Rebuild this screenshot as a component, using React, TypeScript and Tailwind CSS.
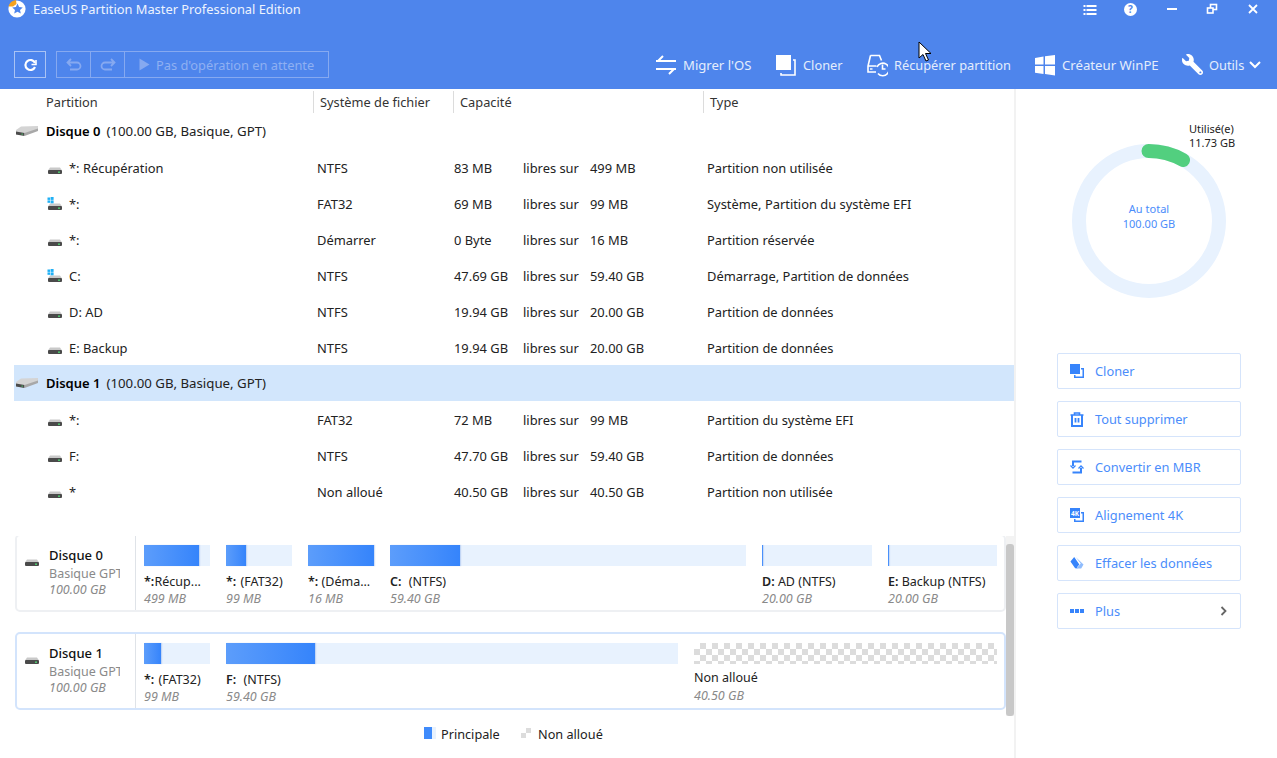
import React from "react";
import { FaWrench } from "react-icons/fa";

const font = "font-['Noto_Sans','Open_Sans',sans-serif]";

type Part = { name: string; fs: string; free: string; total: string; type: string; win?: boolean };

const disk0: Part[] = [
  { name: "*: Récupération", fs: "NTFS", free: "83 MB", total: "499 MB", type: "Partition non utilisée" },
  { name: "*:", fs: "FAT32", free: "69 MB", total: "99 MB", type: "Système, Partition du système EFI", win: true },
  { name: "*:", fs: "Démarrer", free: "0 Byte", total: "16 MB", type: "Partition réservée" },
  { name: "C:", fs: "NTFS", free: "47.69 GB", total: "59.40 GB", type: "Démarrage, Partition de données", win: true },
  { name: "D: AD", fs: "NTFS", free: "19.94 GB", total: "20.00 GB", type: "Partition de données" },
  { name: "E: Backup", fs: "NTFS", free: "19.94 GB", total: "20.00 GB", type: "Partition de données" },
];

const disk1: Part[] = [
  { name: "*:", fs: "FAT32", free: "72 MB", total: "99 MB", type: "Partition du système EFI" },
  { name: "F:", fs: "NTFS", free: "47.70 GB", total: "59.40 GB", type: "Partition de données" },
  { name: "*", fs: "Non alloué", free: "40.50 GB", total: "40.50 GB", type: "Partition non utilisée" },
];

type Bar = { w: number; fill: number; letter: string; label: string; size: string; nudge?: string; hatch?: boolean };

const bars0: Bar[] = [
  { w: 66, fill: 55, letter: "*:", label: "Récup...", size: "499 MB", nudge: "-ml-[3px]" },
  { w: 66, fill: 20, letter: "*:", label: "(FAT32)", size: "99 MB", nudge: "ml-px" },
  { w: 66, fill: 66, letter: "*:", label: "(Déma...", size: "16 MB" },
  { w: 356, fill: 70, letter: "C:", label: "(NTFS)", size: "59.40 GB", nudge: "ml-[4px]" },
  { w: 110, fill: 1, letter: "D:", label: "AD (NTFS)", size: "20.00 GB" },
  { w: 109, fill: 1, letter: "E:", label: "Backup (NTFS)", size: "20.00 GB" },
];

const bars1: Bar[] = [
  { w: 66, fill: 17, letter: "*:", label: "(FAT32)", size: "99 MB", nudge: "ml-px" },
  { w: 452, fill: 89, letter: "F:", label: "(NTFS)", size: "59.40 GB", nudge: "ml-[4px]" },
  { w: 303, fill: 0, letter: "", label: "Non alloué", size: "40.50 GB", hatch: true },
];

function DriveIcon({ win }: { win?: boolean }) {
  return (
    <svg width="16" height="14" viewBox="0 0 16 14" className="shrink-0">
      <path d="M3 6.5h10l2 3H1z" fill="#c9c9c9" />
      <rect x="1" y="9" width="14" height="4" rx="1" fill="#4a4a4a" />
      <rect x="11" y="10.5" width="2" height="1.4" fill="#4fd070" />
      {win && (
        <g fill="#1fb0f5">
          <rect x="0.5" y="0.5" width="2.6" height="2.4" />
          <rect x="3.6" y="0" width="3" height="2.9" />
          <rect x="0.5" y="3.4" width="2.6" height="2.4" />
          <rect x="3.6" y="3.4" width="3" height="2.9" />
        </g>
      )}
    </svg>
  );
}

function BigDriveIcon() {
  return (
    <svg width="24" height="12" viewBox="0 0 24 12" className="shrink-0">
      <path d="M6 1.5 23 1v3.5L10 10 1 9.5V5z" fill="#d4d4d4" />
      <path d="M1 6.5 9.5 8v3L1 9.5z" fill="#4b4b4b" />
      <path d="M9.5 8 23 3.5V6L9.5 11z" fill="#a8a8a8" />
      <rect x="6.5" y="8.6" width="1.4" height="1" fill="#4fd070" />
    </svg>
  );
}

function Logo() {
  return (
    <svg width="20" height="18" viewBox="0 0 20 18" className="shrink-0">
      <circle cx="10" cy="9" r="8.6" fill="#fff" />
      <path d="M1.4 6.5A9 9 0 0 1 9 0L9.5 4 6 6.5z" fill="#f4a21f" />
      <path d="m10.5 3.6 1.6 3.4 3.7.4-2.8 2.5.8 3.7-3.3-1.9-3.3 1.9.8-3.7-2.8-2.5 3.7-.4z" fill="#4e85ec" />
    </svg>
  );
}

function WindowButtons() {
  return (
    <div className="flex items-start pt-[2px] text-white">
      <svg width="14" height="14" viewBox="0 0 14 14" fill="#fff" className="mt-[1px] mr-[27px]">
        <rect x="0.5" y="2" width="2" height="2" />
        <rect x="3.5" y="2" width="10" height="2" />
        <rect x="0.5" y="6" width="2" height="2" />
        <rect x="3.5" y="6" width="10" height="2" />
        <rect x="0.5" y="10" width="2" height="2" />
        <rect x="3.5" y="10" width="10" height="2" />
      </svg>
      <div className="mr-[30px] w-[13px] h-[13px] mt-[1px] rounded-full bg-white text-[#4e85ec] text-[10px] font-bold leading-[13px] text-center">?</div>
      <div className="mt-[6px] mr-[29px] w-[10px] h-[2px] bg-white" />
      <svg width="12" height="12" viewBox="0 0 12 12" fill="none" stroke="#fff" strokeWidth="1.6" className="mt-[1px] mr-[29px]">
        <rect x="4.5" y="1.5" width="6" height="5" />
        <rect x="1.5" y="5" width="5.5" height="5" fill="#4e85ec" />
      </svg>
      <svg width="12" height="12" viewBox="0 0 12 12" stroke="#fff" strokeWidth="1.8" className="mt-[1px] mr-[18px]">
        <path d="m2 2 8 8M10 2l-8 8" />
      </svg>
    </div>
  );
}

function ToolIcon({ kind }: { kind: string }) {
  if (kind === "migrate")
    return (
      <svg width="22" height="22" viewBox="0 0 22 22" fill="none" stroke="#fff" strokeWidth="2">
        <path d="M1 7h20M8 2 3 7M1 15h20M14 20l5-5" />
      </svg>
    );
  if (kind === "clone")
    return (
      <svg width="21" height="22" viewBox="0 0 21 22" fill="none">
        <rect x="0" y="1" width="15" height="15" fill="#fff" />
        <path d="M17 6h2v15H5v-2" stroke="#fff" strokeWidth="1.6" />
      </svg>
    );
  if (kind === "recover")
    return (
      <svg width="22" height="24" viewBox="0 0 22 24" fill="none" stroke="#fff" strokeWidth="1.6">
        <path d="M4.500 2.500h9l2 5M4.500 2.500 2 13v6h8M2 13h8.500" />
        <rect x="4" y="15.300" width="2.500" height="1.400" fill="#fff" stroke="none" />
        <path d="M12 20.500A6.300 6.300 0 1 0 11 14" />
        <path d="M16.500 11.500v4.500h3" />
      </svg>
    );
  if (kind === "win")
    return (
      <svg width="22" height="22" viewBox="0 0 22 22" fill="#fff">
        <path d="M1 4l8.500-1.500v8H1zM11 2.200 21 1v9.500H11zM1 12h8.500v8L1 18.700zM11 12h10v9.500l-10-1.500z" />
      </svg>
    );
  return <FaWrench size={21} color="#fff" className="-scale-x-100" />;
}

function ToolItem({ kind, label, className }: { kind: string; label: string; className: string }) {
  return (
    <div className={`flex items-center gap-[6px] text-[#e4edfc] ${className}`}>
      <ToolIcon kind={kind} />
      <span className="pt-[2px]">{label}</span>
    </div>
  );
}

function Header() {
  return (
    <div className="h-[89px] shrink-0 bg-[#4e85ec] flex flex-col">
      <div className="h-[51px] flex justify-between">
        <div className="flex items-start gap-[6px] pl-[7px] text-[12.85px] leading-[18px]">
          <Logo />
          <span className="text-[#edf3fe]">EaseUS Partition Master Professional Edition</span>
        </div>
        <WindowButtons />
      </div>
      <div className="h-[27px] flex items-center pl-[14px]">
        <div className="w-[32px] h-[27px] border border-[#a9c3f4] flex items-center justify-center mr-[10px]">
          <svg width="14" height="14" viewBox="0 0 14 14" fill="none" stroke="#fff" strokeWidth="2.2">
            <path d="M12 5A5 5 0 1 0 12 9" />
            <path d="M13 2v4.500H8.500" strokeWidth="1.6" />
          </svg>
        </div>
        <div className="w-[273px] h-[27px] border border-[#86a9f0] flex text-[12.8px] text-[#8fb0f2]">
          <div className="w-[34px] border-r border-[#86a9f0] flex items-center justify-center">
            <svg width="16" height="13" viewBox="0 0 16 13" fill="none" stroke="#86a9f0" strokeWidth="1.8">
              <path d="M5 1 1.500 4.500 5 8M2 4.500h9a3.500 3.500 0 0 1 0 7H4" />
            </svg>
          </div>
          <div className="w-[34px] border-r border-[#86a9f0] flex items-center justify-center">
            <svg width="16" height="13" viewBox="0 0 16 13" fill="none" stroke="#86a9f0" strokeWidth="1.8">
              <path d="M11 1l3.500 3.500L11 8M14 4.500H5a3.500 3.500 0 0 0 0 7h7" />
            </svg>
          </div>
          <div className="flex items-center pl-[14px] gap-[6px]">
            <svg width="11" height="13" viewBox="0 0 11 13" fill="#86a9f0">
              <path d="M0.500 0.500 10.500 6.500 0.500 12.500z" />
            </svg>
            <span className="pt-[2px]">Pas d'opération en attente</span>
          </div>
        </div>
        <ToolItem kind="migrate" label="Migrer l'OS" className="ml-[326px] w-[121px] text-[13.1px]" />
        <ToolItem kind="clone" label="Cloner" className="w-[90px] text-[12.8px]" />
        <ToolItem kind="recover" label="Récupérer partition" className="w-[168px] text-[12.8px]" />
        <ToolItem kind="win" label="Créateur WinPE" className="w-[148px] text-[13.2px]" />
        <ToolItem kind="tools" label="Outils" className="text-[12.8px]" />
        <svg width="12" height="8" viewBox="0 0 12 8" fill="none" stroke="#fff" strokeWidth="2" className="ml-[5px]">
          <path d="m1 1 5 5 5-5" />
        </svg>
      </div>
    </div>
  );
}

function ColumnHeader({ label, className }: { label: string; className: string }) {
  return <div className={`h-[22px] pt-[2px] flex items-center text-[12.8px] text-[#333] ${className}`}>{label}</div>;
}

function PartRow({ p }: { p: Part }) {
  return (
    <div className="h-[36px] flex items-center text-[12.9px] text-[#222]">
      <div className="w-[303px] flex items-center pl-[33px] gap-[6px]">
        <DriveIcon win={p.win} />
        <span className="pt-[2px]">{p.name}</span>
      </div>
      <div className="w-[137px] pt-[2px]">{p.fs}</div>
      <div className="w-[69px] pt-[2px]">{p.free}</div>
      <div className="w-[67px] pt-[2px]">libres sur</div>
      <div className="w-[117px] pt-[2px]">{p.total}</div>
      <div className="pt-[2px]">{p.type}</div>
    </div>
  );
}

function DiskRow({ name, active }: { name: string; active?: boolean }) {
  return (
    <div className={`h-[36px] flex items-center text-[13.25px] text-[#222] pl-[1px] gap-[7px] ${active ? "bg-[#d2e6fc] -mt-px" : ""}`}>
      <BigDriveIcon />
      <span className="pt-[2px]">
        <span className="font-semibold text-black text-[13px]">{name}</span>
        <span className="ml-[6px]">(100.00 GB, Basique, GPT)</span>
      </span>
    </div>
  );
}

function BarCell({ b }: { b: Bar }) {
  return (
    <div className="shrink-0" style={{ width: b.w }}>
      {b.hatch ? (
        <div className="h-[21px] bg-[repeating-conic-gradient(#dcdcdc_0_25%,#ffffff_0_50%)] bg-[length:12px_12px]" />
      ) : (
        <div className="h-[21px] bg-[#e8f2fe]">
          <div
            className="h-full bg-gradient-to-r from-[#5c9dfb] to-[#3584fb] shadow-[1px_0_1px_rgba(80,130,220,0.25)]"
            style={{ width: b.fill }}
          />
        </div>
      )}
      <div className={`text-[12.5px] text-[#222] whitespace-pre leading-[18px] ${b.hatch ? "mt-[5px]" : "mt-[7px]"}`}>
        {b.letter && <span className="font-semibold">{b.letter} </span>}
        <span className={b.nudge}>{b.label}</span>
      </div>
      <div className={`text-[12.5px] italic text-[#8a8a8a] leading-[16px] ${b.hatch ? "mt-[1px]" : "mt-0"}`}>{b.size}</div>
    </div>
  );
}

function DiskCard({ name, bars, active, className }: { name: string; bars: Bar[]; active?: boolean; className: string }) {
  return (
    <div className={`h-[78px] w-[991px] rounded-[5px] border-2 flex ${active ? "border-[#d3e4fc]" : "border-[#eef0f3]"} ${className}`}>
      <div className="w-[119px] shrink-0 border-r border-[#dfe3e8] flex items-start">
        <div className="pl-[7px] pt-[17px]">
          <DriveIcon />
        </div>
        <div className="pl-[9px] pt-[10px] overflow-hidden">
          <div className="text-[13px] font-medium text-[#111] leading-[18px]">{name}</div>
          <div className="text-[12.5px] text-[#8a8a8a] leading-[18px] mt-[1px] w-[71px] overflow-hidden whitespace-nowrap">Basique GPT</div>
          <div className="text-[12.5px] italic text-[#8a8a8a] leading-[16px] -mt-px">100.00 GB</div>
        </div>
      </div>
      <div className="flex gap-[16px] pl-[8px] pt-[9px]">
        {bars.map((b, i) => (
          <BarCell key={i} b={b} />
        ))}
      </div>
    </div>
  );
}

function PartitionPane() {
  return (
    <div className="relative w-[1014px] shrink-0 flex flex-col">
      <div className="h-[24px] pt-[2px] flex">
        <ColumnHeader label="Partition" className="w-[314px] pl-[46px] border-r border-[#dcdcdc]" />
        <ColumnHeader label="Système de fichier" className="w-[140px] pl-[6px] border-r border-[#dcdcdc]" />
        <ColumnHeader label="Capacité" className="w-[250px] pl-[6px] border-r border-[#dcdcdc]" />
        <ColumnHeader label="Type" className="pl-[6px]" />
      </div>
      <div className="h-[423px] pl-[14px] overflow-hidden">
        <DiskRow name="Disque 0" />
        <div className="pt-px">
          {disk0.map((p, i) => (
            <PartRow key={i} p={p} />
          ))}
        </div>
        <DiskRow name="Disque 1" active />
        <div className="pt-px">
          {disk1.map((p, i) => (
            <PartRow key={i} p={p} />
          ))}
        </div>
      </div>
      <div className="flex-1 overflow-hidden pl-[15px] relative">
        <DiskCard name="Disque 0" bars={bars0} className="-mt-[2px]" />
        <DiskCard name="Disque 1" bars={bars1} active className="mt-[20px]" />
        <div className="mt-[12px] w-[991px] flex items-center text-[12.7px] text-[#222] pl-[409px]">
          <div className="w-[12px] h-[12px] bg-gradient-to-r from-[#3f8bfb] from-70% to-[#e8f2fe] to-70%" />
          <span className="ml-[5px] w-[80px] pt-[3px]">Principale</span>
          <div className="w-[10px] h-[10px] bg-[repeating-conic-gradient(#dcdcdc_0_25%,#ffffff_0_50%)] bg-[length:10px_10px]" />
          <span className="ml-[7px] pt-[3px]">Non alloué</span>
        </div>
        <div className="absolute right-0 top-0 h-[180px] w-[8px] bg-[#f3f3f3]">
          <div className="mt-[8px] h-[172px] bg-[#c8c8c8] rounded-[3px]" />
        </div>
      </div>
    </div>
  );
}

function ActionIcon({ kind }: { kind: string }) {
  if (kind === "clone")
    return (
      <svg width="14" height="14" viewBox="0 0 14 14" fill="#3784fb">
        <rect x="0" y="0" width="10" height="10" />
        <path d="M11 4h3v10H4v-3h1.500v1.500h7V5.500H11z" />
      </svg>
    );
  if (kind === "trash")
    return (
      <svg width="14" height="15" viewBox="0 0 14 15" fill="none" stroke="#3784fb">
        <path d="M0.500 3h13M4.500 3V1h5v2" strokeWidth="1.600" />
        <path d="M2 3v11h10V3" strokeWidth="2" />
        <path d="M5.500 6v4.500M8.500 6v4.500" strokeWidth="1.800" />
      </svg>
    );
  if (kind === "convert")
    return (
      <svg width="14" height="14" viewBox="0 0 14 14" fill="none" stroke="#3784fb" strokeWidth="2">
        <path d="M3 6V1.500h8.500M2.500 12.500H11V8" />
        <path d="M0.500 5.500 3 8l2.500-2.500M8.500 8.500 11 6l2.500 2.500" strokeWidth="1.300" />
      </svg>
    );
  if (kind === "4k")
    return (
      <svg width="14" height="14" viewBox="0 0 14 14">
        <rect x="0" y="0" width="10" height="10" fill="#3784fb" />
        <path d="M11 4h3v10H4v-3h1.500v1.500h7V5.500H11z" fill="#3784fb" />
        <text x="5" y="7.500" textAnchor="middle" fontSize="6.500" fontWeight="700" fill="#fff">4K</text>
      </svg>
    );
  if (kind === "erase")
    return (
      <svg width="14" height="14" viewBox="0 0 15 14" fill="#3784fb">
        <path d="M4.500 0.500 0.500 5.500l5 7 3 0.500-1-1.500L10 8.500z" />
        <path d="M6 0.500l8.500 8-2.500 4.500H8.500l-1-1 4-4.500z" fill="#8fbcfd" />
      </svg>
    );
  return (
    <svg width="14" height="14" viewBox="0 0 14 14" fill="#3784fb">
      <rect x="0" y="5" width="4" height="4" />
      <rect x="5" y="5" width="4" height="4" />
      <rect x="10" y="5" width="4" height="4" />
    </svg>
  );
}

function ActionButton({ kind, label, more }: { kind: string; label: string; more?: boolean }) {
  return (
    <div className="w-[184px] h-[36px] border border-[#d5e4fb] rounded-[2px] flex items-center pl-[12px] gap-[11px] text-[12.8px] text-[#4b8dfb]">
      <ActionIcon kind={kind} />
      <span className="flex-1 pt-[2px]">{label}</span>
      {more && (
        <svg width="7" height="10" viewBox="0 0 7 10" fill="none" stroke="#666" strokeWidth="1.800" className="mr-[13px]">
          <path d="m1.500 1 4 4-4 4" />
        </svg>
      )}
    </div>
  );
}

function SidePanel() {
  return (
    <div className="flex-1 border-l-2 border-[#f2f2f2] flex flex-col pl-[41px]">
      <div className="relative w-[154px] h-[154px] mt-[55px] ml-[15px] shrink-0">
        <svg width="154" height="154" viewBox="0 0 154 154" fill="none">
          <circle cx="77" cy="77" r="70" stroke="#e8f2fe" strokeWidth="14" />
          <path d="M76.500 7A70 70 0 0 1 111 16" stroke="#52cf7f" strokeWidth="14" strokeLinecap="round" />
        </svg>
        <div className="absolute inset-0 pb-[10px] flex flex-col items-center justify-center text-[11px] leading-[15px] text-[#4b8dfb]">
          <span>Au total</span>
          <span>100.00 GB</span>
        </div>
        <div className="absolute left-[117px] -top-[22px] text-[11px] leading-[14px] text-[#222] whitespace-nowrap">
          <div>Utilisé(e)</div>
          <div>11.73 GB</div>
        </div>
      </div>
      <div className="mt-[55px] flex flex-col gap-[12px]">
        <ActionButton kind="clone" label="Cloner" />
        <ActionButton kind="trash" label="Tout supprimer" />
        <ActionButton kind="convert" label="Convertir en MBR" />
        <ActionButton kind="4k" label="Alignement 4K" />
        <ActionButton kind="erase" label="Effacer les données" />
        <ActionButton kind="more" label="Plus" more />
      </div>
    </div>
  );
}

export default function App() {
  return (
    <div className={`relative w-[1277px] h-[758px] overflow-hidden bg-white flex flex-col ${font}`}>
      <Header />
      <div className="flex-1 flex min-h-0">
        <PartitionPane />
        <SidePanel />
      </div>
      {/* mouse pointer caught in the capture */}
      <svg width="14" height="22" viewBox="0 0 14 22" className="absolute left-[918px] top-[41px]">
        <path d="M1 1v16l4-3.500 3 6.500 2.500-1-3-6.500H13z" fill="#fff" stroke="#000" strokeWidth="1" />
      </svg>
    </div>
  );
}
